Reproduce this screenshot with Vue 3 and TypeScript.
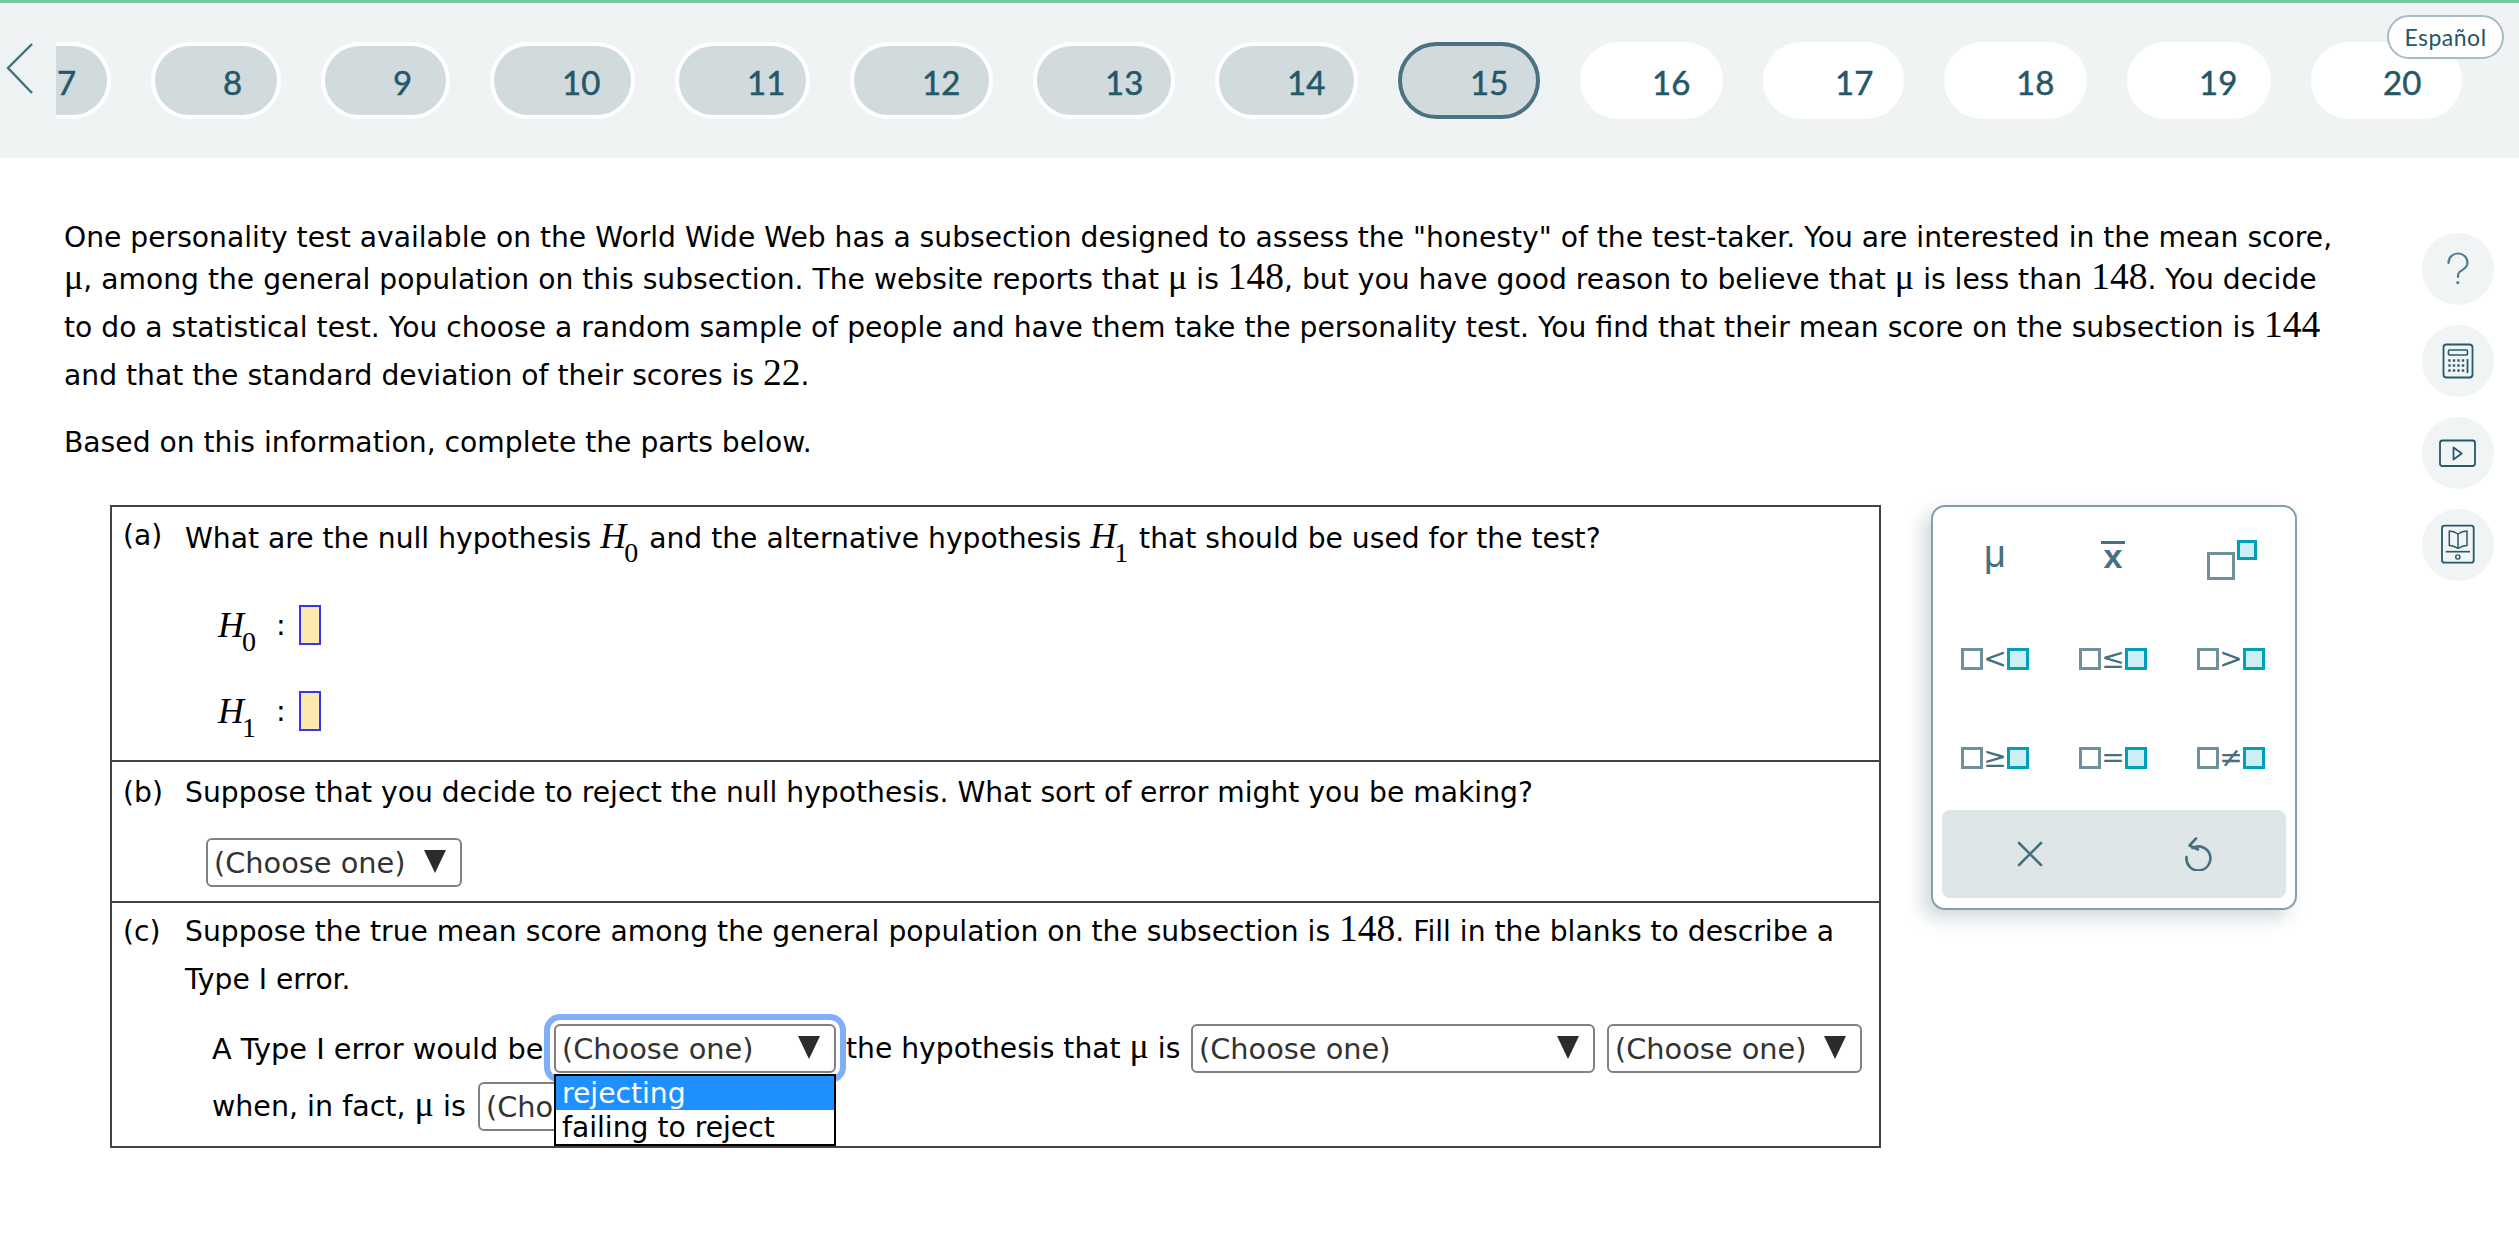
<script setup lang="ts">
interface Pill { n: number; width: number; state: 'done' | 'current' | 'todo' }
const widths = [126, 130, 129, 145, 135, 143, 142, 143, 142, 143, 141, 143, 144, 151]
const pills: Pill[] = widths.map((width, i) => {
  const n = i + 7
  return { n, width, state: n < 15 ? 'done' : n === 15 ? 'current' : 'todo' }
})
const ops = [
  { op: '<' }, { op: '≤' }, { op: '>' },
  { op: '≥' }, { op: '=' }, { op: '≠' }
]
const dotsX = [27.5, 32, 36.5, 41]
const dotsY = [35.5, 40.5, 45.5]
</script>

<template>
  <div class="page">
    <header class="top">
      <div class="pills">
        <div v-for="p in pills" :key="p.n" class="pill" :class="p.state" :style="{ width: p.width + 'px' }">{{ p.n }}</div>
      </div>
      <div class="back">
        <svg width="40" height="60" viewBox="0 0 40 60"><polyline points="32,2 8,26 32,51" fill="none" stroke="#41707f" stroke-width="2.4" /></svg>
      </div>
      <div class="lang">Español</div>
    </header>

    <div class="content">
      <main class="main">
        <div class="para">
          <div class="line l1">One personality test available on the World Wide Web has a subsection designed to assess the "honesty" of the test-taker. You are interested in the mean score,</div>
          <div class="line"><span class="mu">μ</span>, among the general population on this subsection. The website reports that <span class="mu">μ</span> is <span class="num">148</span>, but you have good reason to believe that <span class="mu">μ</span> is less than <span class="num">148</span>. You decide</div>
          <div class="line">to do a statistical test. You choose a random sample of people and have them take the personality test. You find that their mean score on the subsection is <span class="num">144</span></div>
          <div class="line">and that the standard deviation of their scores is <span class="num">22</span>.</div>
          <div class="line based">Based on this information, complete the parts below.</div>
        </div>

        <div class="work">
          <section class="table">
            <div class="part a">
              <div class="q"><span class="lab">(a)</span><span>What are the null hypothesis <i class="h">H<sub>0</sub></i> and the alternative hypothesis <i class="h">H<sub>1</sub></i> that should be used for the test?</span></div>
              <div class="hyps">
                <div class="hyp"><i class="h big">H<sub>0</sub></i><span class="colon">:</span><span class="box"></span></div>
                <div class="hyp"><i class="h big">H<sub>1</sub></i><span class="colon">:</span><span class="box"></span></div>
              </div>
            </div>
            <div class="part b">
              <div class="q"><span class="lab">(b)</span><span>Suppose that you decide to reject the null hypothesis. What sort of error might you be making?</span></div>
              <div class="sel s1"><span>(Choose one)</span><i class="tri"></i></div>
            </div>
            <div class="part c">
              <div class="q"><span class="lab">(c)</span><span>Suppose the true mean score among the general population on the subsection is <span class="num">148</span>. Fill in the blanks to describe a</span></div>
              <div class="q cont">Type I error.</div>
              <div class="blanks">
                <span class="w1">A Type I error would be</span>
                <div class="sel s2 focus">
                  <span>(Choose one)</span><i class="tri"></i>
                  <div class="list">
                    <div class="opt on">rejecting</div>
                    <div class="opt">failing to reject</div>
                  </div>
                </div>
                <span class="w2">the hypothesis that <span class="mu">μ</span> is</span>
                <div class="sel s3"><span>(Choose one)</span><i class="tri"></i></div>
                <div class="sel s4"><span>(Choose one)</span><i class="tri"></i></div>
              </div>
              <div class="blanks second">
                <span class="w3">when, in fact, <span class="mu">μ</span> is</span>
                <div class="sel s5"><span>(Choose one)</span><i class="tri"></i></div>
              </div>
            </div>
          </section>

          <aside class="panel">
            <div class="keys">
              <div class="key first"><span class="mu-key">μ</span></div>
              <div class="key first"><span class="xbar">x</span></div>
              <div class="key power"><span class="sq base"></span><span class="sq on small"></span></div>
              <div v-for="o in ops" :key="o.op" class="key">
                <span class="opgroup"><span class="sq"></span><span class="opg">{{ o.op }}</span><span class="sq on"></span></span>
              </div>
            </div>
            <div class="actions">
              <svg width="28" height="28" viewBox="0 0 28 28"><path d="M3 3 L25 25 M25 3 L3 25" stroke="#44707f" stroke-width="2.6" stroke-linecap="round" fill="none" /></svg>
              <svg width="30" height="34" viewBox="0 0 30 34"><path d="M9.5 11 A12 12 0 1 1 3.5 20" stroke="#44707f" stroke-width="2.6" fill="none" stroke-linecap="round" /><path d="M13 1.5 L6.5 8.5 L15 12.5" stroke="#44707f" stroke-width="2.6" fill="none" stroke-linecap="round" stroke-linejoin="round" /></svg>
            </div>
          </aside>
        </div>
      </main>

      <nav class="rail">
        <div class="tool">
          <svg width="72" height="72" viewBox="0 0 72 72"><path d="M26.5 30 C26.5 24 31 20.5 36 20.5 C41 20.5 45.5 24 45.5 30 C45.5 35 40 37 37.5 39 C36.3 40 36 42 36 44" fill="none" stroke="#4f7f8e" stroke-width="2.2" stroke-linecap="round" /><circle cx="35.8" cy="49.6" r="1.6" fill="#4f7f8e" /></svg>
        </div>
        <div class="tool">
          <svg width="72" height="72" viewBox="0 0 72 72">
            <rect x="21.5" y="19.5" width="29" height="33" rx="3" fill="none" stroke="#255a6b" stroke-width="1.8" />
            <rect x="26.5" y="25" width="19" height="5" rx="1" fill="none" stroke="#255a6b" stroke-width="1.6" />
            <g fill="#255a6b">
              <template v-for="y in dotsY" :key="y"><rect v-for="x in dotsX" :key="x" :x="x - 1.2" :y="y - 1.2" width="2.4" height="2.4" /></template>
            </g>
            <path d="M45.5 34 V48" stroke="#255a6b" stroke-width="1.8" />
          </svg>
        </div>
        <div class="tool">
          <svg width="72" height="72" viewBox="0 0 72 72">
            <rect x="18" y="23.5" width="35" height="25.5" rx="2.5" fill="none" stroke="#255a6b" stroke-width="1.8" />
            <path d="M31.5 30.5 L39.7 36.5 L31.5 42.5 Z" fill="none" stroke="#255a6b" stroke-width="1.8" stroke-linejoin="round" />
          </svg>
        </div>
        <div class="tool">
          <svg width="72" height="72" viewBox="0 0 72 72">
            <rect x="20" y="16.7" width="31.7" height="37" rx="2.5" fill="none" stroke="#255a6b" stroke-width="1.8" />
            <path d="M23.7 42.7 H48" stroke="#255a6b" stroke-width="1.6" />
            <circle cx="35.8" cy="48" r="2.1" fill="none" stroke="#255a6b" stroke-width="1.4" />
            <path d="M36 25 C33 23 30 22 27.3 22 V36.5 C30 36.5 33 37.5 36 39.3 C39 37.5 42 36.5 45 36.5 V22 C42 22 39 23 36 25 V39" fill="none" stroke="#255a6b" stroke-width="1.5" stroke-linejoin="round" />
          </svg>
        </div>
      </nav>
    </div>
  </div>
</template>

<style>
html, body { margin: 0; background: #fff; overflow: hidden; }
</style>

<style scoped>
.page { width: 2519px; height: 1237px; font-family: "DejaVu Sans", Verdana, sans-serif; font-size: 28.2px; color: #000; overflow: hidden; }
.top { position: relative; height: 155px; border-top: 3px solid #74c9a0; background: #eff3f4; display: flex; align-items: flex-start; overflow: hidden; }
.pills { display: flex; gap: 40px; margin-left: -15px; margin-top: 39px; flex: none; }
.pill { box-sizing: border-box; height: 77px; padding: 3px 0 0 68px; border-radius: 38.5px; display: flex; align-items: center; font-family: Lato, sans-serif; font-size: 33px; color: #245868; -webkit-text-stroke: 0.5px #245868; border: 4px solid #fff; background: #d1dadd; flex: none; }
.pill.current { border-color: #4a7282; }
.pill.todo { background: #fff; }
.back { position: absolute; left: 0; top: 39px; width: 56px; height: 77px; background: rgba(239, 243, 244, 0.93); }
.back svg { display: block; }
.lang { position: absolute; left: 2387px; top: 12px; box-sizing: border-box; width: 117px; height: 44px; border: 2px solid #a6bcc4; border-radius: 22px; background: #fff; font-family: Lato, sans-serif; font-size: 23px; color: #245868; display: flex; align-items: center; justify-content: center; letter-spacing: 0.5px; }

.content { display: flex; }
.main { width: 2422px; flex: none; padding-left: 64px; box-sizing: border-box; }
.para { padding-top: 61px; }
.line { height: 48px; line-height: 48px; white-space: nowrap; }
.line.l1 { height: 37px; line-height: 37px; }
.line.based { margin-top: 19px; }
.mu { font-family: "Liberation Serif", serif; font-size: 36px; line-height: 0; }
.num { font-family: "Liberation Serif", serif; font-size: 37.5px; line-height: 0; }
.work { display: flex; gap: 50px; margin-left: 46px; margin-top: 38px; align-items: flex-start; }
.table { box-sizing: border-box; width: 1771px; height: 643px; border: 2px solid #444; flex: none; }
.part { box-sizing: border-box; border-bottom: 2px solid #444; padding-left: 11px; }
.part.c { border-bottom: 0; }
.part.a { height: 255px; padding-top: 8px; }
.part.b { height: 141px; padding-top: 10px; }
.part.c { padding-top: 5px; }
.q { display: flex; height: 42px; line-height: 42px; white-space: nowrap; }
.lab { width: 62px; flex: none; }
.part.c .q { height: 48px; line-height: 48px; }
.q.cont { padding-left: 62px; }
.h { font-family: "Liberation Serif", serif; font-size: 36px; font-style: italic; }
.h sub { font-style: normal; font-size: 28px; line-height: 0; vertical-align: -14px; margin-left: -2px; margin-right: 2px; }
.hyps { padding-top: 25px; padding-left: 95px; }
.hyp { height: 86px; display: flex; align-items: center; }
.hyp .h { width: 58px; }
.colon { width: 24px; font-size: 28.8px; }
.box { box-sizing: border-box; width: 22px; height: 40px; border: 2.5px solid #3636f0; background: #fde9b0; margin-left: -1px; }
.sel { box-sizing: border-box; position: relative; height: 49px; border: 2px solid #808080; border-radius: 6px; background: #fff; color: #333; font-size: 28.8px; display: flex; align-items: center; justify-content: space-between; padding: 0 14px 0 6px; flex: none; }
.tri { width: 0; height: 0; border-left: 11.5px solid transparent; border-right: 11.5px solid transparent; border-top: 23px solid #2b2b2b; margin-top: -3px; }
.s1 { width: 256px; margin-left: 83px; margin-top: 24px; }
.blanks { display: flex; align-items: center; padding-left: 89px; white-space: nowrap; margin-top: 20px; height: 49px; }
.blanks.second { margin-top: 9px; }
.w1 { width: 342px; flex: none; font-size: 28.8px; }
.w2 { width: 355px; flex: none; padding-left: 10px; box-sizing: border-box; }
.w3 { width: 266px; flex: none; font-size: 28.5px; }
.s2 { width: 282px; }
.s2.focus { outline: 6px solid #7fb0f5; outline-offset: 4px; z-index: 2; }
.s3 { width: 404px; }
.s4 { width: 255px; margin-left: 12px; }
.s5 { width: 280px; }
.list { box-sizing: border-box; position: absolute; left: -2px; top: 48px; width: 282px; height: 72px; border: 2px solid #000; background: #fff; color: #000; font-size: 28.2px; }
.opt { height: 34px; line-height: 36px; padding-left: 6px; }
.opt.on { background: #1e90ff; color: #fff; }

.panel { box-sizing: border-box; width: 366px; height: 405px; border: 2px solid #82a0aa; border-radius: 14px; background: #fff; box-shadow: -8px 8px 18px rgba(90, 120, 130, 0.28); padding: 0 9px; flex: none; color: #44707f; }
.keys { display: grid; grid-template-columns: repeat(3, 118px); grid-auto-rows: 99px; margin-left: -6px; padding-top: 3px; height: 301px; box-sizing: border-box; }
.key { display: flex; align-items: center; justify-content: center; position: relative; }
.key.first { padding-bottom: 10px; box-sizing: border-box; }
.mu-key { font-family: "Liberation Sans", sans-serif; font-size: 38px; }
.xbar { font-family: "Liberation Sans", sans-serif; font-weight: 700; font-size: 34px; line-height: 24px; border-top: 3.5px solid #44707f; width: 24px; text-align: center; }
.sq { box-sizing: border-box; display: block; width: 22px; height: 22px; border: 3px solid #6f919c; flex: none; }
.sq.on { border-color: #00a0b8; background: #cdeff3; }
.opgroup { display: flex; align-items: center; }
.opg { font-family: "DejaVu Sans", sans-serif; font-size: 28px; line-height: 22px; width: 24px; text-align: center; }
.base { width: 28px; height: 28px; position: absolute; left: 35px; top: 42px; }
.small { width: 20px; height: 20px; position: absolute; left: 65px; top: 30px; border-width: 3px; }
.actions { height: 88px; margin-top: 2px; background: #dfe6e8; border-radius: 8px; display: flex; align-items: center; justify-content: space-around; padding: 0 4px; }

.rail { display: flex; flex-direction: column; gap: 20px; padding-top: 75px; }
.tool { width: 72px; height: 72px; border-radius: 50%; background: #f0f4f5; }
.tool svg { display: block; }
</style>
